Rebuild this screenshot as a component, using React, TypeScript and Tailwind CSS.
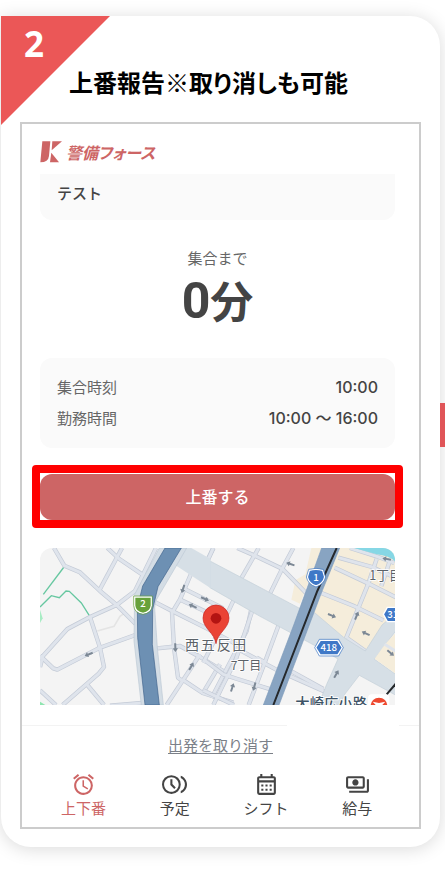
import React from 'react';
import { MdAccessAlarm, MdOutlineBrowseGallery, MdOutlineCalendarMonth, MdOutlinePayments } from 'react-icons/md';
import type { IconType } from 'react-icons';

interface NavItem {
  label: string;
  icon: IconType;
  active?: boolean;
}

interface ArrowProps {
  x: number;
  y: number;
  angle: number;
}

const navItems: NavItem[] = [
  { label: '上下番', icon: MdAccessAlarm, active: true },
  { label: '予定', icon: MdOutlineBrowseGallery },
  { label: 'シフト', icon: MdOutlineCalendarMonth },
  { label: '給与', icon: MdOutlinePayments },
];

const schedule = [
  { label: '集合時刻', value: '10:00' },
  { label: '勤務時間', value: '10:00 〜 16:00' },
];

// narrow streets, west side of the expressway
const westRoads = [
  'M102 51L133 104L180 124L240 180L290 222L346 278',
  'M306 51L238 178',
  'M262 51L298 84L372 134',
  'M408 51L345 180L290 222L210 258L142 294L60 385',
  'M346 312L240 350L112 416L100 412L60 374',
  'M210 258L240 350L252 408L236 428L128 522',
  'M60 408L66 385',
  'M202 462L252 522',
  'M60 478L108 522',
  'M270 524L366 516',
];

const middleRoads = [
  'M515 124L480 205L456 245L462 350L474 440L488 450',
  'M490 172L610 232',
  'M478 205L600 262',
  'M402 212L456 240L560 292L650 340',
  'M412 352L480 345L540 378L610 420',
  'M540 370L440 522',
  'M600 400L550 484',
  'M488 446L548 486L640 515',
  'M580 51L564 84',
  'M575 500L640 375L680 300L700 205',
];

const eastRoads = [
  'M10 51L-8 90',
  'M82 51L130 72L218 114L288 186',
  'M146 51L95 140',
  'M250 51L218 110L180 188',
  'M72 205L22 310L-20 395',
  'M128 236L76 390L40 460L10 522',
  'M206 282L166 390L116 522',
  'M-20 385L40 430L82 444L192 478',
  'M-20 478L72 522',
  'M80 352L210 422L345 482',
  'M166 395L140 380',
  'M246 422L340 474',
];

const creamRoads = [
  'M385 80L486 108L560 142',
  'M374 110L476 158L560 200',
  'M334 186L434 226L520 268',
  'M500 84L474 160L408 322',
  'M540 88L514 165',
  'M420 51L500 76L553 96',
  'M412 322L466 360',
];

const Arrow: React.FC<ArrowProps> = ({ x, y, angle }) => (
  <path
    d="M-13 -3H2V-8L13 0L2 8V3H-13Z"
    fill="#7c8895"
    transform={`translate(${x} ${y}) rotate(${angle})`}
  />
);

const Roads: React.FC<{ paths: string[] }> = ({ paths }) => (
  <g fill="none" strokeLinejoin="round">
    {paths.map((d) => <path key={d} d={d} stroke="#c3cad6" strokeWidth={13} />)}
    {paths.map((d) => <path key={d} d={d} stroke="#dfe4ec" strokeWidth={9} />)}
  </g>
);

const AreaMap: React.FC = () => (
  <svg viewBox="60 51 1065 471" className="block h-auto w-full rounded-t-xl font-['Noto_Sans_CJK_JP',sans-serif]" role="img" aria-label="西五反田7丁目">
    <rect x="60" y="51" width="1065" height="471" fill="#f4f4f4" />

    <g fill="none" stroke="#66c7a0" strokeWidth="4">
      <path d="M132 108L70 190" />
      <path d="M60 228L94 194L118 200L138 180L148 181L184 216L208 254" />
    </g>
    <path d="M60 236L68 262L60 276Z" fill="#a8ecc4" />
    <path d="M60 512L76 522H60Z" fill="#8fe5b0" />
    <path d="M232 300L282 286L300 256L312 248" fill="none" stroke="#e4e4e4" strokeWidth="5" />

    <Roads paths={westRoads} />
    <Roads paths={middleRoads} />

    <g transform="translate(570 0)">
      <path d="M304 51H335L270 218L244 206L256 148L286 130Z" fill="#f5eddb" />
      <path d="M386 51L560 51V270L462 360L405 322L312 246Z" fill="#f5eddb" />
      <Roads paths={eastRoads} />
      <Roads paths={creamRoads} />
      <path d="M432 51H560V96Q540 74 500 70Z" fill="#86d7e5" />
      <path
        d="M0 90L180 185L265 230L315 246L402 320L466 360L516 282L530 270L560 272V296L494 385L560 432V494L448 433L404 490L390 522H325L350 460L384 384L330 352L240 304L150 256L0 170Z"
        fill="#d6dfe6"
        stroke="#c3ced8"
        strokeWidth="2"
      />
      <path d="M560 302L525 340L494 383L560 430Z" fill="#f5eddb" />
      <path d="M524 340L560 362" fill="none" stroke="#dfe4ec" strokeWidth="9" />
    </g>
    <path d="M472 51H514L572 84V172L462 100Z" fill="#d6dfe6" />

    {/* expressway with its side roads */}
    <path d="M418 51H500L474 96L407 210L404 230L412 350L430 522H364L342 330L344 190Z" fill="#d4dde5" stroke="#bcc8d4" strokeWidth="2" />
    <path d="M435 51H484L414 167L398 235L397 340L418 522H375L353 320L352 230L368 165Z" fill="#6d90b3" stroke="#41648c" strokeWidth="2" />

    <g transform="translate(570 0)">
      <path d="M335 51H389L334 186L207 522H160L252 280Z" fill="#88a4c2" stroke="#7e9bbb" strokeWidth="2" />
      <path d="M380 51L322 180L190 522" fill="none" stroke="#25282b" strokeWidth="6" />
      <path d="M560 455L530 490" fill="none" stroke="#25282b" strokeWidth="6" />
      <Arrow x={241} y={99} angle={198} />
      <Arrow x={366} y={254} angle={22} />
      <Arrow x={440} y={254} angle={-68} />
      <Arrow x={467} y={307} angle={205} />
      <Arrow x={530} y={84} angle={190} />
      <Arrow x={542} y={366} angle={40} />
      <Arrow x={379} y={429} angle={-60} />
      <Arrow x={67} y={469} angle={-72} />
      <Arrow x={133} y={467} angle={105} />
    </g>
    <Arrow x={206} y={370} angle={158} />
    <Arrow x={489} y={174} angle={108} />
    <Arrow x={555} y={204} angle={24} />
    <Arrow x={518} y={225} angle={205} />
    <Arrow x={466} y={350} angle={88} />
    <Arrow x={514} y={406} angle={-60} />

    {/* route shields */}
    <g fill="#fff" textAnchor="middle" fontWeight="500" fontSize="29">
      <path d="M344 198H394V224Q392 244 369 247Q346 244 344 224Z" fill="#67a13b" stroke="#fff" strokeWidth="4" />
      <path d="M341 195H397V224Q395 247 369 250Q343 247 341 224Z" fill="none" stroke="#67a13b" strokeWidth="2" />
      <text x="369" y="228">2</text>
      <path d="M868 118Q888 112 908 118L914 138Q910 158 888 165Q866 158 862 138Z" fill="#3f78c7" stroke="#fff" strokeWidth="4" />
      <path d="M866 115Q888 109 910 115L917 138Q912 160 888 168Q864 160 859 138Z" fill="none" stroke="#3f78c7" strokeWidth="2" />
      <text x="888" y="149">1</text>
      <path d="M901 328H953L967 350L953 372H901L887 350Z" fill="#3f78c7" stroke="#fff" strokeWidth="4" />
      <path d="M898 325H956L970 350L956 375H898L884 350Z" fill="none" stroke="#3f78c7" strokeWidth="2" />
      <text x="926" y="360">418</text>
      <path d="M1102 229H1160V272H1102L1090 250Z" fill="#3f78c7" stroke="#fff" strokeWidth="4" />
      <text x="1118" y="260">31</text>
    </g>

    <g fill="#5b6268" stroke="#fff" strokeWidth="5" paintOrder="stroke">
      <text x="495" y="358" fontSize="42">西</text>
      <text x="542" y="358" fontSize="42">五</text>
      <text x="590" y="358" fontSize="42">反</text>
      <text x="637" y="358" fontSize="42">田</text>
      <text x="632" y="416" fontSize="36">7丁目</text>
      <text x="1048" y="148" fontSize="38">1丁目</text>
      <text x="826" y="535" fontSize="43" fontWeight="500" fill="#3e5365">大崎広小路</text>
    </g>

    <path d="M588 338C584 306 549 292 549 261A39 39 0 0 1 627 261C627 292 592 306 588 338Z" fill="#ea4335" stroke="#c5221f" strokeWidth="2" />
    <circle cx="588" cy="262" r="16" fill="#b31412" />

    <g transform="translate(570 0)">
      <rect x="474" y="490" width="64" height="50" rx="12" fill="#fff" />
      <circle cx="507" cy="525" r="25" fill="#ee4930" />
      <path d="M488 512L507 516L526 512L515 524L520 536L507 530L494 536L499 524Z" fill="#fff" />
    </g>
  </svg>
);

const Logo: React.FC = () => (
  <div className="flex items-center gap-1 text-[#cd6565]">
    <svg width="22" height="22" viewBox="0 0 66 66" fill="currentColor" aria-hidden="true">
      <path d="M7 1H31L27 45Q25 64 1 64Z" />
      <path d="M37 1H66L35 28Z" />
      <path d="M34 35L57 64H30Z" />
    </svg>
    <span className="font-['Noto_Sans_CJK_JP',sans-serif] text-base leading-6 font-bold italic [font-feature-settings:'palt']">警備フォース</span>
  </div>
);

const PhoneScreen: React.FC = () => (
  <section className="mx-[19px] border-2 border-[#cccccc] bg-white text-[15px] text-[#444444]">
    <div className="pt-4 pr-6 pl-[18px]">
      <Logo />
      <div className="mt-2.5 rounded-b-xl bg-[#fafafa] px-[17px] pt-2 pb-3.5 leading-6 font-medium">テスト</div>

      <div className="mt-[27px] text-center">
        <p className="leading-6 text-[#666666]">集合まで</p>
        <p className="text-[43px] leading-[60px] font-bold">
          <span className="font-[Roboto,sans-serif] text-[50px] leading-[60px]">0</span>分
        </p>
      </div>

      <dl className="mt-[26px] rounded-xl bg-[#fafafa] px-[17px] py-3.5">
        {schedule.map(({ label, value }) => (
          <div key={label} className="flex items-center justify-between leading-[31px]">
            <dt className="text-[#666666]">{label}</dt>
            <dd className="text-base leading-[31px] font-medium">{value}</dd>
          </div>
        ))}
      </dl>

      <div className="-mx-2 mt-[17px] rounded border-8 border-[#ff0000] pt-px">
        <button type="button" className="block w-full rounded-xl bg-[#cd6565] text-base leading-[46px] font-medium text-white">
          上番する
        </button>
      </div>

      <div className="mt-5">
        <AreaMap />
      </div>
    </div>

    <div className="mt-5 flex h-px justify-between">
      <span className="w-2/3 bg-[#f3f3f3]" />
      <span className="w-5 bg-[#f3f3f3]" />
    </div>

    <div className="pt-2 text-center">
      <button type="button" className="leading-6 text-[#7b8088] underline underline-offset-2">出発を取り消す</button>
    </div>

    <nav className="mt-3.5 grid grid-cols-4 px-4 pb-1.5">
      {navItems.map(({ label, icon: Icon, active }) => (
        <a key={label} href="#" className={`flex flex-col items-center ${active ? 'text-[#cd6565]' : 'text-[#444444]'}`}>
          <Icon size={25} />
          <span className="leading-6">{label}</span>
        </a>
      ))}
    </nav>
  </section>
);

const App: React.FC = () => {
  return (
    <main className="relative overflow-hidden bg-white pt-4 pr-[5px] pb-9 pl-px font-[Inter,'Noto_Sans_CJK_JP',sans-serif]">
      <article className="relative rounded-[30px] rounded-tl-none bg-white pb-[18px] shadow-[0_2px_18px_rgba(0,0,0,0.15)]">
        <svg width="109" height="109" viewBox="0 0 109 109" className="absolute top-0 left-0" aria-hidden="true">
          <path d="M0 0H109L0 109Z" fill="#eb5757" />
        </svg>
        <span className="absolute top-2 left-[23px] font-['Open_Sans',sans-serif] text-[35px] leading-10 font-bold text-white">2</span>
        <h2 className="relative pt-12 pr-6 pb-[22px] text-center font-['Noto_Sans_CJK_JP',sans-serif] text-2xl leading-9 font-bold text-black [font-feature-settings:'palt']">
          上番報告※取り消しも可能
        </h2>
        <PhoneScreen />
      </article>
      <div className="absolute top-[403px] right-0 h-11 w-[5px] bg-[#e05558]" />
    </main>
  );
};

export default App;
